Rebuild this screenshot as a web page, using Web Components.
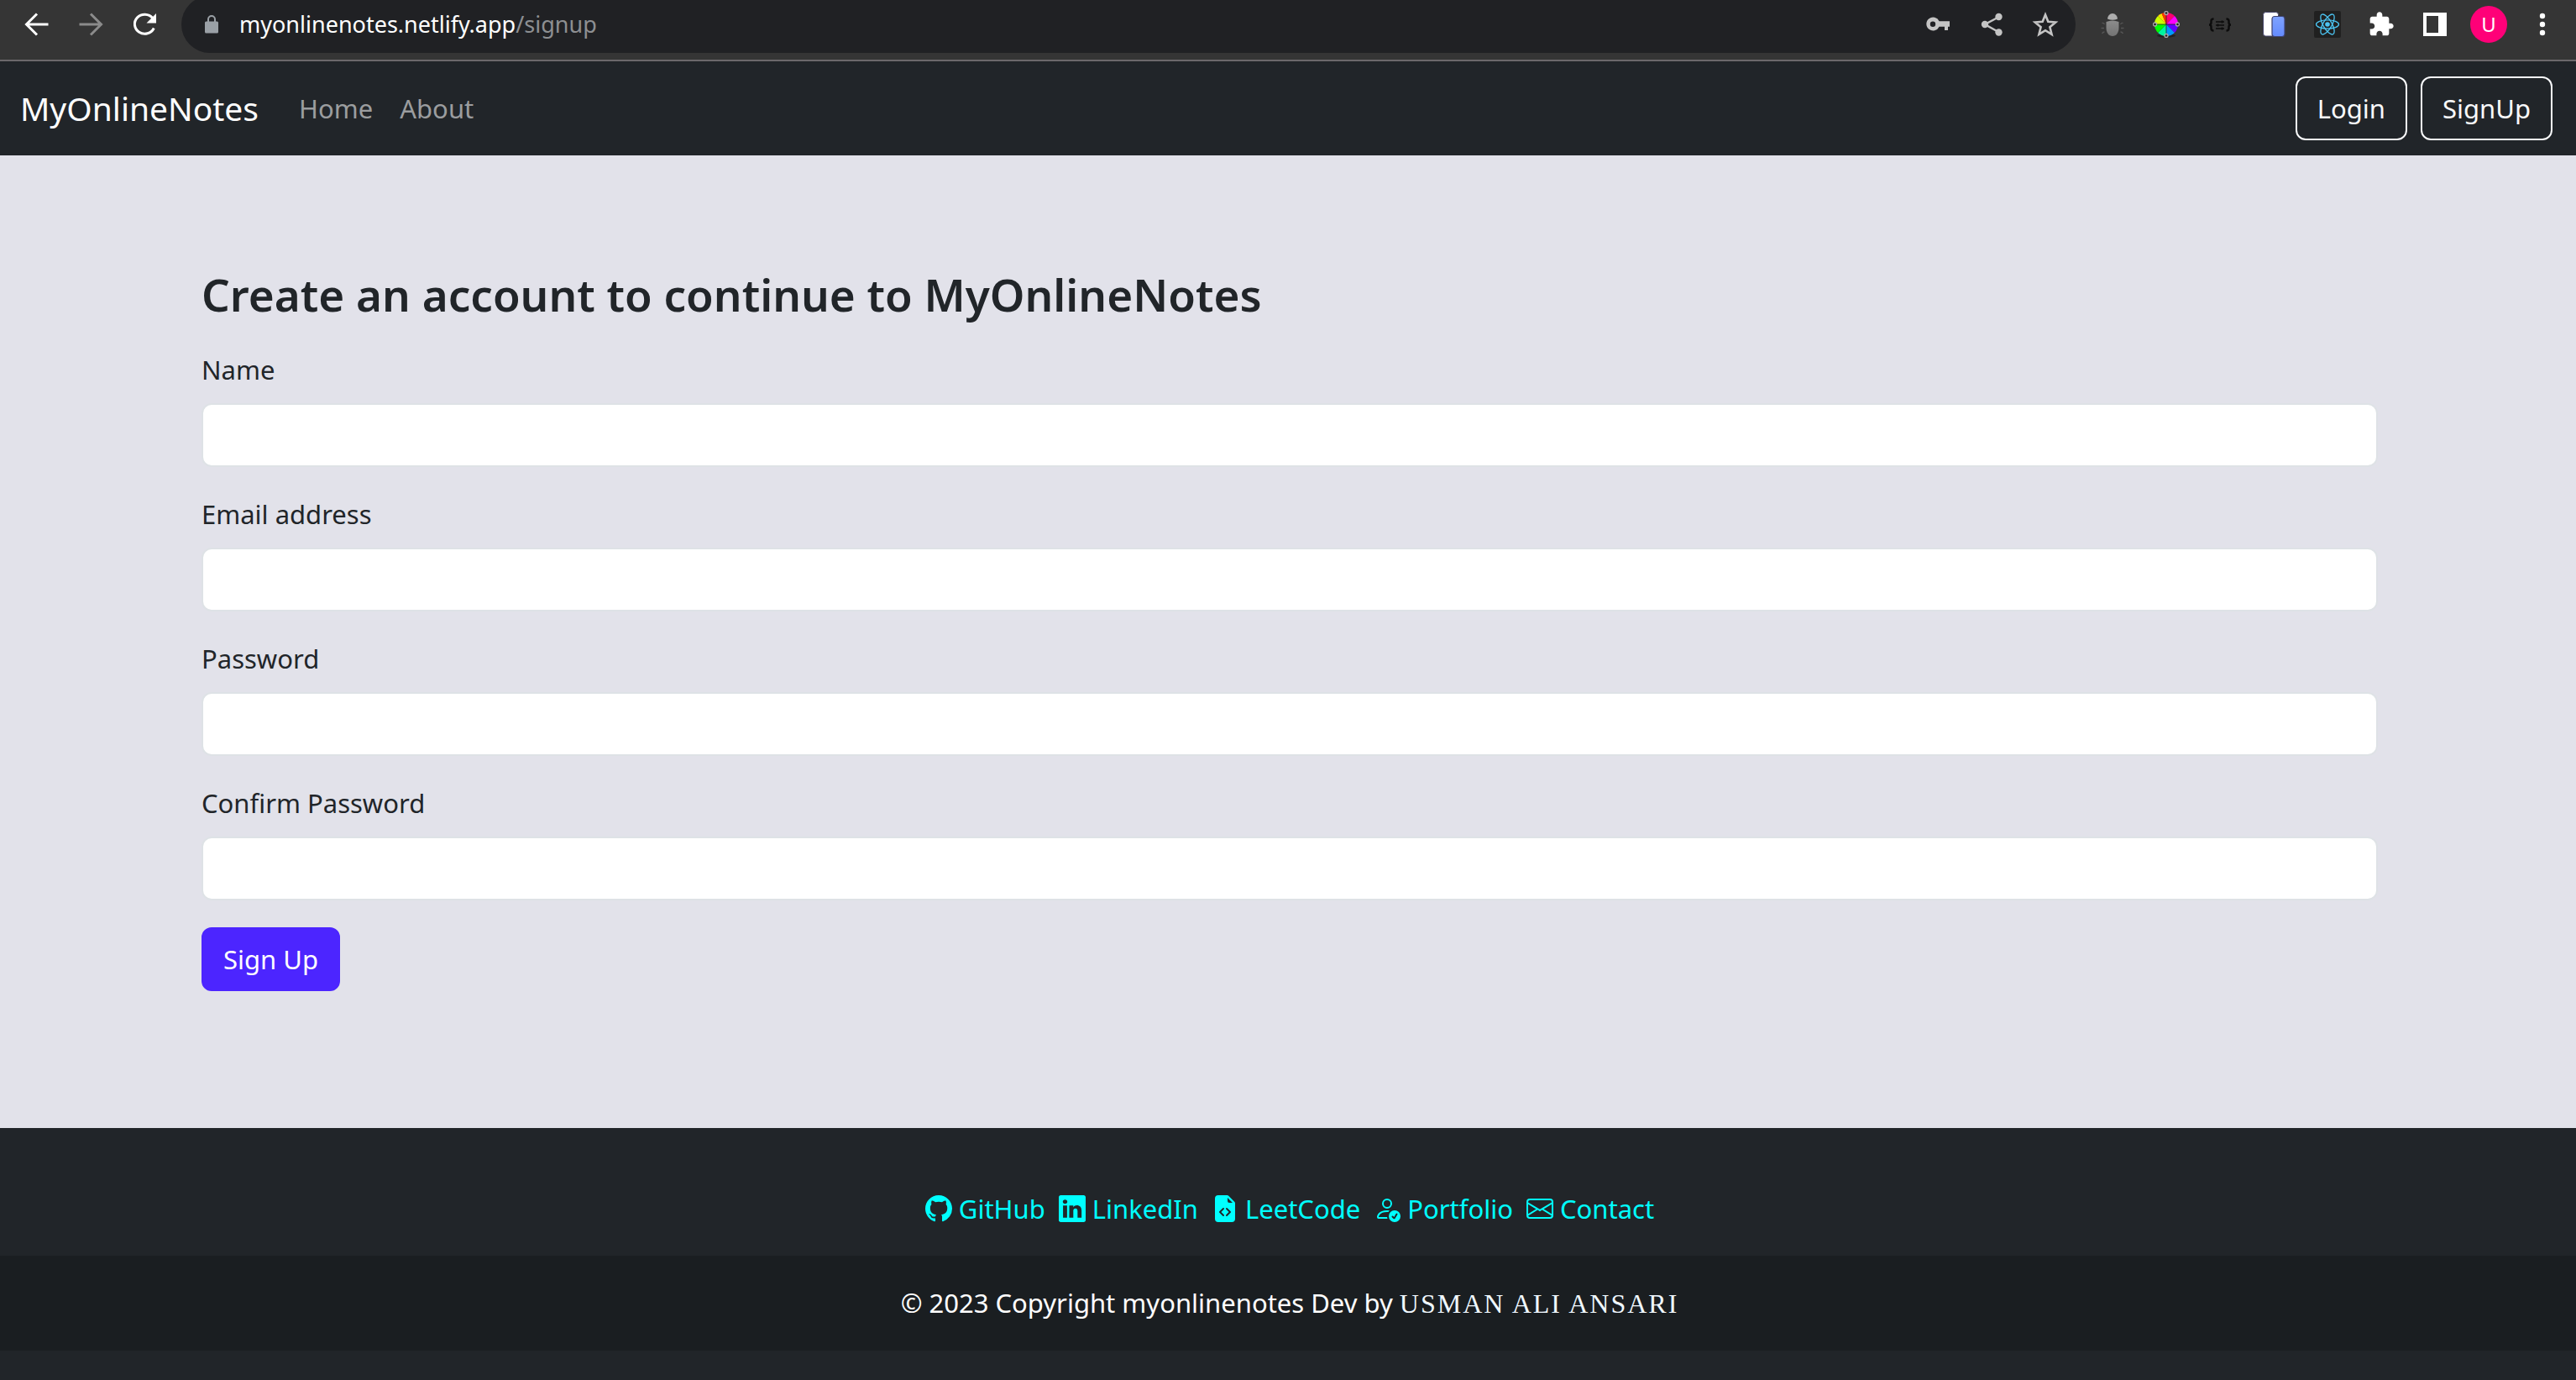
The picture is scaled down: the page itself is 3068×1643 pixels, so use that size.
<!DOCTYPE html>
<html lang="en">
<head>
<meta charset="utf-8">
<title>MyOnlineNotes</title>
<style>
  body {
    margin: 0;
    font-family: "Noto Sans", "Open Sans", sans-serif;
    font-size: 31px;
    line-height: 48px;
    color: #212529;
    background: #212529;
  }
</style>
</head>
<body>
<notes-app></notes-app>

<script>
const define = (name, html, setup) => {
  const template = document.createElement('template');
  template.innerHTML = html;
  customElements.define(name, class extends HTMLElement {
    constructor() {
      super();
      this.attachShadow({ mode: 'open' }).append(template.content.cloneNode(true));
    }
    connectedCallback() { if (setup) setup.call(this, this.shadowRoot); }
  });
};

/* Inline icons: [viewBox, markup] */
const icons = {
  back: ['0 0 32 32', '<path d="M29.500 16H4M16 3.500 3.500 16 16 28.500" fill="none" stroke="currentColor" stroke-width="3"/>'],
  forward: ['0 0 32 32', '<path d="M2.500 16H28M16 3.500 28.500 16 16 28.500" fill="none" stroke="currentColor" stroke-width="3"/>'],
  reload: ['0 0 32 32', '<path d="M25.800 8.500A12 11.500 0 1 0 27.300 20.500" fill="none" stroke="currentColor" stroke-width="3"/><path d="M30 3v11.500H18.500z" fill="currentColor"/>'],
  lock: ['0 0 18 24', '<path d="M2.500 8.500h13A1.500 1.500 0 0 1 17 10v11a1.500 1.500 0 0 1-1.500 1.500h-13A1.500 1.500 0 0 1 1 21V10a1.500 1.500 0 0 1 1.500-1.500z" fill="currentColor"/><path d="M5 10V6a4 4 0 0 1 8 0v4" fill="none" stroke="currentColor" stroke-width="2"/>'],
  key: ['0 0 32 32', '<path d="M17.600 12.200A8 8 0 1 0 17.600 18.800H24V23H28V18.800H30V12.200zM10 12.500a3.200 3.200 0 1 1 0 6.400 3.200 3.200 0 0 1 0-6.400z" fill="currentColor" fill-rule="evenodd"/>'],
  share: ['0 0 32 32', '<path d="M25 7 8 16 25 25.500" fill="none" stroke="currentColor" stroke-width="2.500"/><circle cx="24.500" cy="7" r="4.200" fill="currentColor"/><circle cx="8" cy="16" r="4.200" fill="currentColor"/><circle cx="24.500" cy="25.500" r="4.200" fill="currentColor"/>'],
  star: ['0 0 32 32', '<path d="m16 4.500 3.300 8.300 8.900.7-6.800 5.700 2.200 8.700-7.600-4.700-7.600 4.700 2.200-8.700L3.800 13.500l8.900-.7z" fill="none" stroke="currentColor" stroke-width="2.600"/>'],
  bug: ['0 0 32 32', '<defs><linearGradient id="g" x2="0" y2="1"><stop stop-color="#8c8c8c"/><stop offset="1" stop-color="#737373"/></linearGradient></defs><path d="M10 9.500a6 6.500 0 0 1 12 0q-6 2.500-12 0z" fill="#adadad"/><path d="M8.500 13Q16 10 23.500 13v7c0 6-3 10-7.500 10s-7.500-4-7.500-10z" fill="url(#g)"/><path d="M6.500 16q-1-2-3-1.500M6 20.500H2.500M6.500 25q-2 0-3 2M25.500 16q1-2 3-1.500M26 20.500h3.500M25.500 25q2 0 3 2" fill="none" stroke="#555" stroke-width="1.400"/>'],
  wheel: ['0 0 32 32', '<ellipse cx="16" cy="29.500" rx="11" ry="2" fill="#222"/><g transform="translate(16 16)"><path d="M0 0V-14A14 14 0 0 1 9.900-9.900z" fill="#ff0070"/><path d="M0 0 9.900-9.900A14 14 0 0 1 14 0z" fill="#f0f"/><path d="M0 0H14A14 14 0 0 1 9.900 9.900z" fill="#60f"/><path d="M0 0 9.900 9.900A14 14 0 0 1 0 14z" fill="#09f"/><path d="M0 0V14A14 14 0 0 1-9.900 9.900z" fill="#00f5a0"/><path d="M0 0-9.900 9.900A14 14 0 0 1-14 0z" fill="#0f0"/><path d="M0 0H-14A14 14 0 0 1-9.900-9.900z" fill="#cf0"/><path d="M0 0-9.900-9.900A14 14 0 0 1-5.400-13z" fill="#ffe000"/><path d="M0 0-5.400-13A14 14 0 0 1 0-14z" fill="#f30"/><path d="M0-14V14M-14 0H14" stroke="#222" stroke-width=".8"/></g><g fill="#222" stroke="#aaa" stroke-width="1.300"><circle cx="16" cy="2.500" r="2"/><circle cx="29.500" cy="16" r="2"/><circle cx="16" cy="29.500" r="2"/><circle cx="2.500" cy="16" r="2"/></g>'],
  braces: ['0 0 32 32', '<path d="M8.500 9.500q-3 0-3 2.500v2q0 2.500-2.500 2.500 2.500 0 2.500 2.500v2q0 2.500 3 2.500M23.500 9.500q3 0 3 2.500v2q0 2.500 2.500 2.500-2.500 0-2.500 2.500v2q0 2.500-3 2.500" fill="none" stroke="#0c0c0c" stroke-width="2.400"/><path d="M11 13h10M11 17h10M11 21h10M18.500 11.500v3M13.500 15.500v3M18.500 19.500v3" stroke="#0c0c0c" stroke-width="1.700"/>'],
  docs: ['0 0 32 32', '<defs><linearGradient id="g" x2="0" y2="1"><stop stop-color="#7fa3ff"/><stop offset="1" stop-color="#648bff"/></linearGradient></defs><rect x="3.500" y="1.500" width="18" height="28.500" rx="3" fill="#fff" stroke="#45456a"/><rect x="14" y="6.500" width="15" height="24" rx="3" fill="url(#g)" stroke="#3f4372" stroke-width="1.200"/>'],
  react: ['0 0 32 32', '<rect width="32" height="32" rx="2" fill="#202020"/><g fill="none" stroke="#4cc4f2" stroke-width="1.300"><ellipse cx="16" cy="16" rx="13.500" ry="5.200"/><ellipse cx="16" cy="16" rx="13.500" ry="5.200" transform="rotate(60 16 16)"/><ellipse cx="16" cy="16" rx="13.500" ry="5.200" transform="rotate(120 16 16)"/></g><circle cx="16" cy="16" r="2.800" fill="#4cc4f2"/>'],
  puzzle: ['0 0 24 24', '<path fill="currentColor" d="M20.500 11H19V7c0-1.100-.9-2-2-2h-4V3.500C13 2.120 11.880 1 10.500 1S8 2.120 8 3.500V5H4c-1.100 0-1.990.9-1.990 2v3.800H3.500c1.490 0 2.700 1.210 2.700 2.700s-1.210 2.700-2.700 2.700H2V20c0 1.100.9 2 2 2h3.800v-1.500c0-1.490 1.210-2.700 2.700-2.700 1.490 0 2.700 1.210 2.700 2.700V22H17c1.100 0 2-.9 2-2v-4h1.500c1.380 0 2.500-1.120 2.500-2.500S21.880 11 20.500 11z"/>'],
  panel: ['0 0 32 32', '<path fill="currentColor" fill-rule="evenodd" d="M2 2h28v28H2zM6 6v20h14V6z"/>'],
  dots: ['0 0 32 32', '<g fill="currentColor"><circle cx="16" cy="6" r="3.200"/><circle cx="16" cy="16" r="3.200"/><circle cx="16" cy="26" r="3.200"/></g>'],
  github: ['0 0 16 16', '<path fill="currentColor" d="M8 0C3.580 0 0 3.580 0 8c0 3.540 2.290 6.530 5.470 7.590.4.070.55-.17.55-.38 0-.19-.01-.82-.01-1.490-2.010.37-2.530-.49-2.690-.94-.09-.23-.48-.94-.82-1.130-.28-.15-.68-.52-.01-.53.63-.01 1.080.58 1.230.82.72 1.210 1.870.87 2.330.66.07-.52.28-.87.51-1.070-1.780-.2-3.640-.89-3.640-3.950 0-.87.31-1.590.82-2.150-.08-.2-.36-1.020.08-2.120 0 0 .67-.21 2.200.82.64-.18 1.320-.27 2-.27s1.360.09 2 .27c1.530-1.040 2.200-.82 2.200-.82.44 1.100.16 1.920.08 2.120.51.56.82 1.270.82 2.150 0 3.070-1.870 3.750-3.650 3.950.29.25.54.73.54 1.480 0 1.070-.01 1.930-.01 2.200 0 .21.15.46.55.38A8.010 8.010 0 0 0 16 8c0-4.420-3.580-8-8-8"/>'],
  linkedin: ['0 0 16 16', '<path fill="currentColor" d="M0 1.146C0 .513.526 0 1.175 0h13.650C15.474 0 16 .513 16 1.146v13.708c0 .633-.526 1.146-1.175 1.146H1.175C.526 16 0 15.487 0 14.854zm4.943 12.248V6.169H2.542v7.225zm-1.200-8.212c.837 0 1.358-.554 1.358-1.248-.015-.709-.52-1.248-1.342-1.248S2.400 3.226 2.400 3.934c0 .694.521 1.248 1.327 1.248zm4.908 8.212V9.359c0-.216.016-.432.080-.586.173-.431.568-.878 1.232-.878.869 0 1.216.662 1.216 1.634v3.865h2.401V9.250c0-2.220-1.184-3.252-2.764-3.252-1.274 0-1.845.7-2.165 1.193v.025h-.016l.016-.025V6.169h-2.400c.030.678 0 7.225 0 7.225z"/>'],
  code: ['0 0 16 16', '<path fill="currentColor" d="M9.293 0H4a2 2 0 0 0-2 2v12a2 2 0 0 0 2 2h8a2 2 0 0 0 2-2V4.707A1 1 0 0 0 13.707 4L10 .293A1 1 0 0 0 9.293 0M9.500 3.500v-2l3 3h-2a1 1 0 0 1-1-1M6.646 7.646a.5.5 0 1 1 .708.708L5.707 10l1.647 1.646a.5.5 0 0 1-.708.708l-2-2a.5.5 0 0 1 0-.708zm2.708 0 2 2a.5.5 0 0 1 0 .708l-2 2a.5.5 0 0 1-.708-.708L10.293 10 8.646 8.354a.5.5 0 1 1 .708-.708"/>'],
  person: ['0 0 16 16', '<path fill="currentColor" d="M12.500 16a3.500 3.500 0 1 0 0-7 3.500 3.500 0 0 0 0 7m1.679-4.493-1.335 2.226a.75.75 0 0 1-1.174.144l-.774-.773a.5.5 0 0 1 .708-.708l.547.548 1.170-1.951a.5.5 0 1 1 .858.514M11 5a3 3 0 1 1-6 0 3 3 0 0 1 6 0M8 7a2 2 0 1 0 0-4 2 2 0 0 0 0 4"/><path fill="currentColor" d="M8.256 14a4.500 4.500 0 0 1-.229-1.004H3c.001-.246.154-.986.832-1.664C4.484 10.680 5.711 10 8 10q.390 0 .74.025c.226-.341.496-.650.804-.918Q8.844 9.002 8 9c-5 0-6 3-6 4s1 1 1 1z"/>'],
  envelope: ['0 0 16 16', '<path fill="currentColor" d="M0 4a2 2 0 0 1 2-2h12a2 2 0 0 1 2 2v8a2 2 0 0 1-2 2H2a2 2 0 0 1-2-2zm2-1a1 1 0 0 0-1 1v.217l7 4.200 7-4.200V4a1 1 0 0 0-1-1zm13 2.383-4.708 2.825L15 11.105zm-.034 6.876-5.640-3.471L8 9.583l-1.326-.795-5.640 3.470A1 1 0 0 0 2 13h12a1 1 0 0 0 .966-.741M1 11.105l4.708-2.897L1 5.383z"/>']
};

define('ui-icon', `
  <style>
    :host { display: block; width: 32px; height: 32px; flex: none; }
    svg { display: block; width: 100%; height: 100%; }
  </style>
  <svg aria-hidden="true"></svg>`, function (root) {
  const [box, markup] = icons[this.getAttribute('name')];
  const svg = root.querySelector('svg');
  svg.setAttribute('viewBox', box);
  svg.innerHTML = markup;
});

define('tool-button', `
  <style>
    :host { display: block; flex: none; color: #fff; }
    button { display: flex; align-items: center; justify-content: center; width: 64px; height: 58px;
             padding: 0; border: 0; background: none; color: inherit; font: inherit; }
  </style>
  <button type="button"><slot></slot></button>`, function (root) {
  root.querySelector('button').setAttribute('aria-label', this.getAttribute('label'));
});

define('browser-bar', `
  <style>
    :host { display: flex; align-items: center; gap: 12px; box-sizing: border-box; height: 73px;
            padding: 0 8px 13px 12px; overflow: hidden; background: #353535; border-bottom: 2px solid #6b686b; }
    .group { display: flex; }
    .dim { color: #8b8b8b; }
    .address { flex: 1; display: flex; align-items: center; height: 68px; border-radius: 34px;
               padding: 0 4px 0 27px; background: #202124; }
    .address ui-icon { color: #9aa0a6; }
    .address .lock { width: 18px; height: 24px; }
    .url { flex: 1; padding-left: 24px; font-size: 27px; line-height: 40px; color: #fff; }
    .url span { color: #8d8f92; }
    .address tool-button ui-icon { color: #c4c4c4; }
    .avatar { width: 44px; height: 44px; border-radius: 50%; background: #ff0078; color: #fff;
              font-size: 24px; line-height: 44px; text-align: center; }
  </style>
  <div class="group">
    <tool-button label="Back"><ui-icon name="back"></ui-icon></tool-button>
    <tool-button label="Forward" class="dim"><ui-icon name="forward"></ui-icon></tool-button>
    <tool-button label="Reload"><ui-icon name="reload"></ui-icon></tool-button>
  </div>
  <div class="address">
    <ui-icon class="lock" name="lock"></ui-icon>
    <div class="url">myonlinenotes.netlify.app<span>/signup</span></div>
    <tool-button label="Passwords"><ui-icon name="key"></ui-icon></tool-button>
    <tool-button label="Share"><ui-icon name="share"></ui-icon></tool-button>
    <tool-button label="Bookmark"><ui-icon name="star"></ui-icon></tool-button>
  </div>
  <div class="group">
    <tool-button label="Bug extension"><ui-icon name="bug"></ui-icon></tool-button>
    <tool-button label="Colour picker"><ui-icon name="wheel"></ui-icon></tool-button>
    <tool-button label="JSON settings"><ui-icon name="braces"></ui-icon></tool-button>
    <tool-button label="Documents"><ui-icon name="docs"></ui-icon></tool-button>
    <tool-button label="React tools"><ui-icon name="react"></ui-icon></tool-button>
    <tool-button label="Extensions"><ui-icon name="puzzle"></ui-icon></tool-button>
    <tool-button label="Side panel"><ui-icon name="panel"></ui-icon></tool-button>
    <tool-button label="Profile"><div class="avatar">U</div></tool-button>
    <tool-button label="Menu"><ui-icon name="dots"></ui-icon></tool-button>
  </div>`);

define('site-nav', `
  <style>
    :host { display: block; background: #212529; }
    nav { display: flex; align-items: center; padding: 16px 28px 16px 24px; min-height: 80px; }
    a { text-decoration: none; color: #9b9d9f; }
    .brand { font-size: 39px; line-height: 60px; color: #fff; margin-right: 32px; }
    .links { display: flex; flex: 1; }
    .links a { padding: 0 16px; }
    .actions { display: flex; gap: 16px; }
    .actions a { padding: 12px 24px; border: 2px solid #f8f9fa; border-radius: 12px; color: #f8f9fa; }
  </style>
  <nav>
    <a class="brand" href="#">MyOnlineNotes</a>
    <div class="links"><a href="#home">Home</a><a href="#about">About</a></div>
    <div class="actions"><a href="#login">Login</a><a href="#signup">SignUp</a></div>
  </nav>`);

define('form-field', `
  <style>
    :host { display: block; margin-bottom: 32px; }
    label { display: block; margin-bottom: 16px; }
    input { display: block; box-sizing: border-box; width: 100%; height: 76px; padding: 12px 24px;
            border: 2px solid #dee2e6; border-radius: 12px; background: #fff; color: inherit; font: inherit; }
  </style>
  <label for="field"></label>
  <input id="field">`, function (root) {
  root.querySelector('label').textContent = this.getAttribute('label');
  root.querySelector('input').type = this.getAttribute('type');
});

define('signup-form', `
  <style>
    :host { display: block; padding: 132px 236px 163px 240px; background: #e2e2ea; }
    h1 { margin: 0 0 32px; font-size: 53px; line-height: 67px; font-weight: 600; }
    button { display: block; padding: 12px 24px; border: 2px solid #4c25ff; border-radius: 12px;
             background: #4c25ff; color: #fff; font: inherit; }
  </style>
  <h1>Create an account to continue to MyOnlineNotes</h1>
  <form>
    <form-field label="Name" type="text"></form-field>
    <form-field label="Email address" type="email"></form-field>
    <form-field label="Password" type="password"></form-field>
    <form-field label="Confirm Password" type="password"></form-field>
    <button type="button">Sign Up</button>
  </form>`);

define('social-link', `
  <style>
    :host { display: block; }
    a { display: flex; align-items: center; gap: 8px; color: #0ff; text-decoration: none; }
  </style>
  <a><slot></slot></a>`, function (root) {
  const link = root.querySelector('a');
  link.href = '#' + this.getAttribute('icon');
  const icon = document.createElement('ui-icon');
  icon.setAttribute('name', this.getAttribute('icon'));
  link.prepend(icon);
});

define('site-footer', `
  <style>
    :host { display: block; background: #212529; padding-bottom: 36px; }
    .links { display: flex; justify-content: center; gap: 16px; padding: 72px 0 32px 4px; }
    .copyright { padding: 32px 0 32px 4px; text-align: center; color: #fff; background: #1a1e21; }
    .copyright a { font-family: "Liberation Serif", serif; font-size: 32px; letter-spacing: 2px;
                   color: #f0f8ff; text-decoration: none; }
  </style>
  <div class="links">
    <social-link icon="github">GitHub</social-link>
    <social-link icon="linkedin">LinkedIn</social-link>
    <social-link icon="code">LeetCode</social-link>
    <social-link icon="person">Portfolio</social-link>
    <social-link icon="envelope">Contact</social-link>
  </div>
  <div class="copyright">© 2023 Copyright myonlinenotes Dev by <a href="#author">USMAN ALI ANSARI</a></div>`);

define('notes-app', `
  <style>:host { display: block; overflow: hidden; }</style>
  <browser-bar></browser-bar>
  <site-nav></site-nav>
  <main><signup-form></signup-form></main>
  <site-footer></site-footer>`);
</script>
</body>
</html>
